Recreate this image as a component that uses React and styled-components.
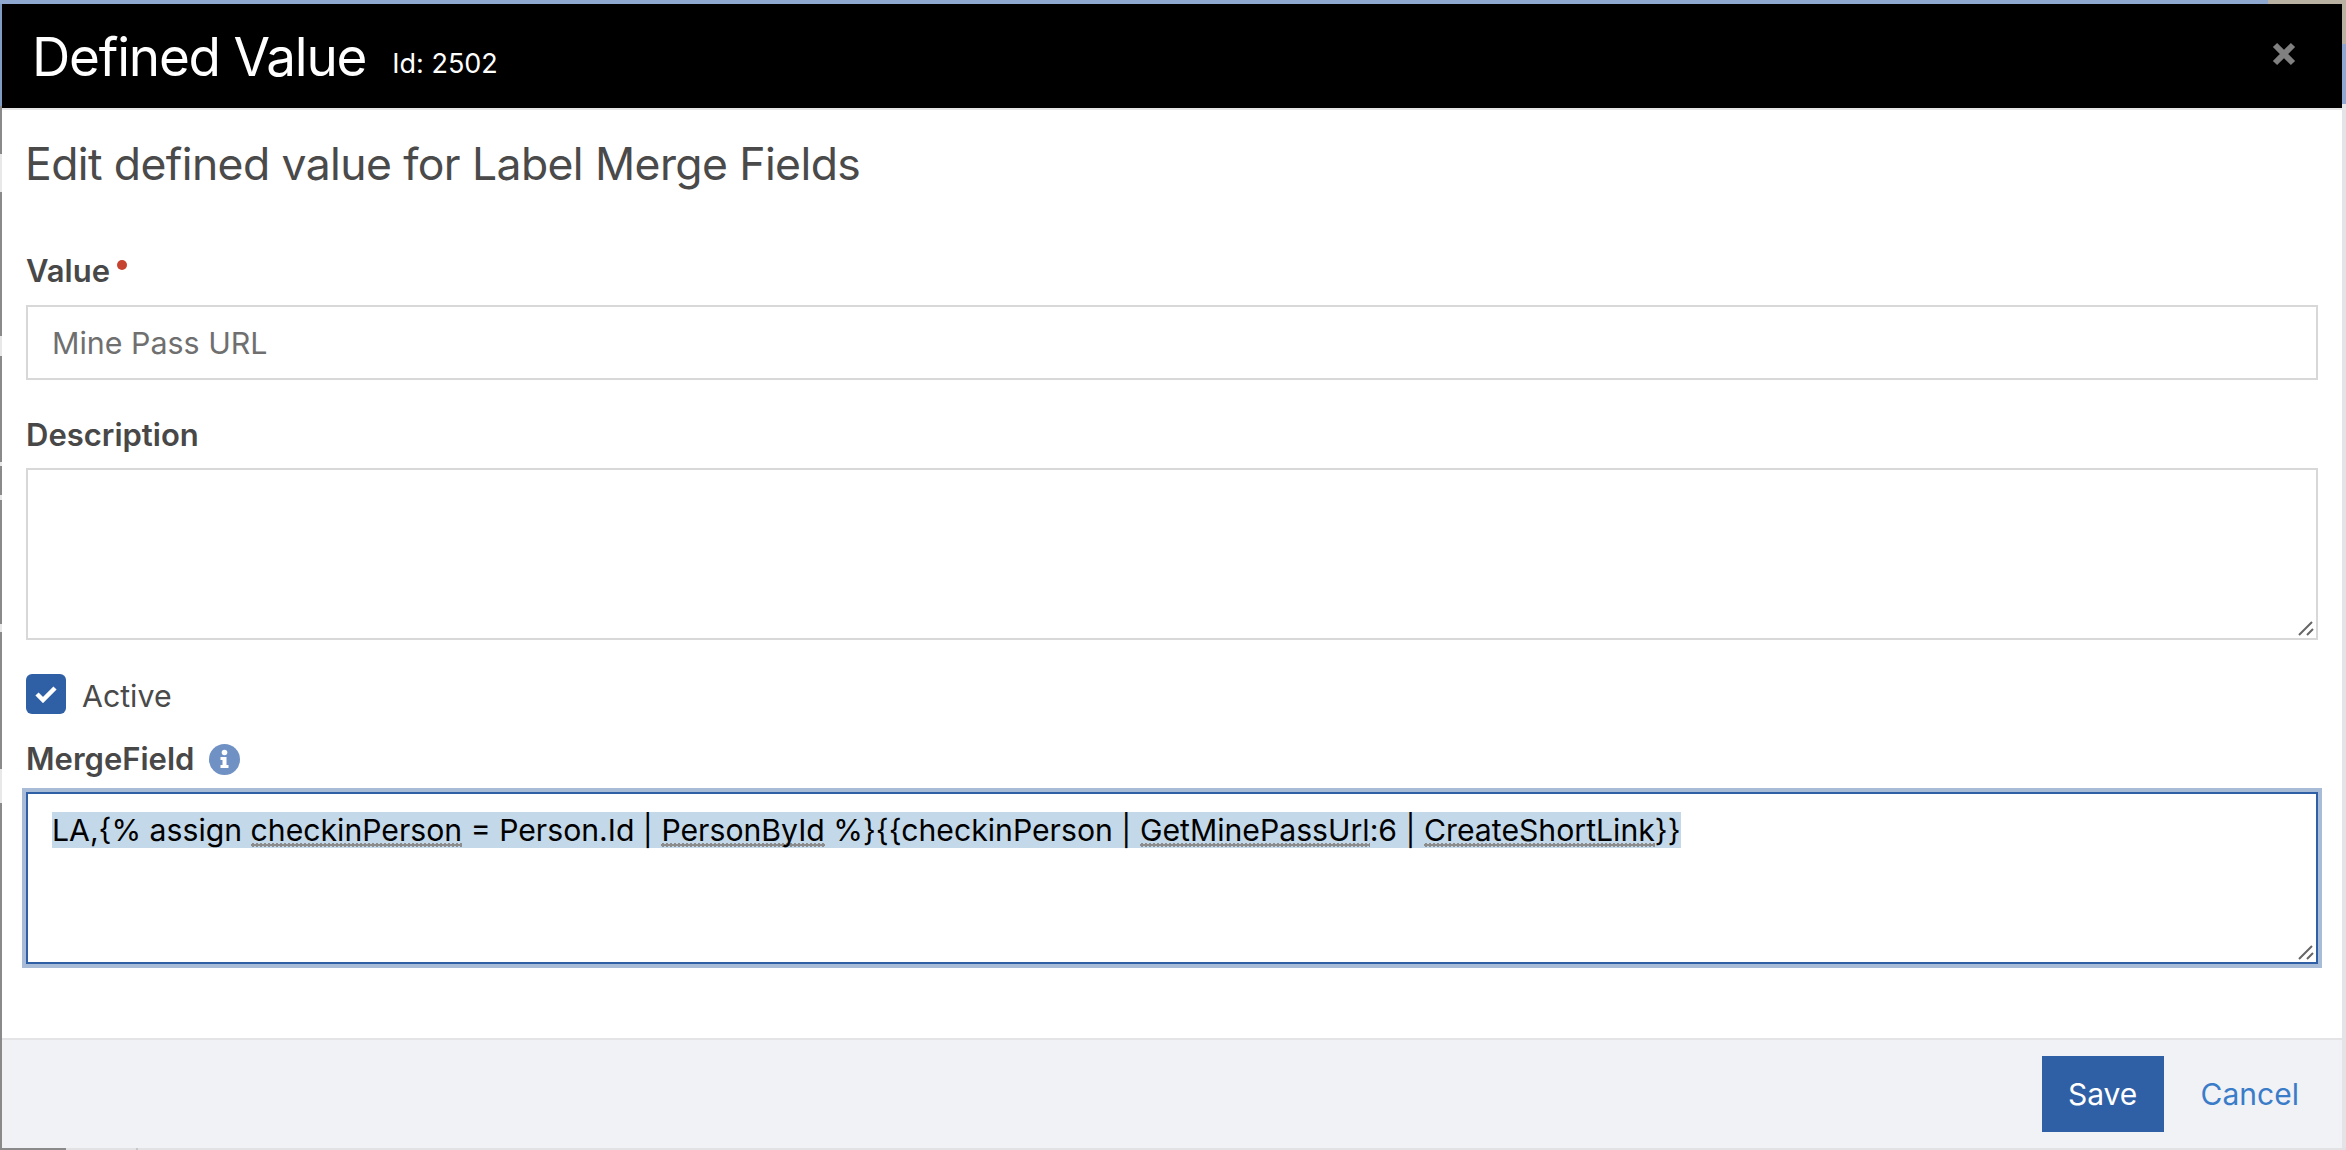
import React from "react";
import styled, { createGlobalStyle } from "styled-components";

const Global = createGlobalStyle`
  html, body { margin: 0; padding: 0; background: #e4e4e6; }
  body { width: 2346px; height: 1150px; overflow: hidden; font-family: Inter, "Liberation Sans", sans-serif; -webkit-font-smoothing: antialiased; }
`;

const Backdrop = styled.div`
  width: 2346px;
  height: 1150px;
  box-sizing: border-box;
  padding: 4px 4px 2px 2px;
  background:
    linear-gradient(90deg, transparent 2268px, #b9b2a2 2268px) top / 100% 44px no-repeat,
    linear-gradient(#8fa8d0 0 4px, transparent 4px),
    linear-gradient(90deg, #8a8a8a 0 66px, #e2e2e4 66px 136px, #c6c6c8 136px 138px, #e2e2e4 138px) bottom / 100% 2px no-repeat,
    linear-gradient(#7f9cc5 0 106px, #8a8a8a 106px 154px, #e8e8e8 154px 192px, #8a8a8a 192px 336px, #e8e8e8 336px 356px, #8a8a8a 356px 462px, #e8e8e8 462px 466px, #8a8a8a 466px 495px, #e8e8e8 495px 500px, #8a8a8a 500px 624px, #e8e8e8 624px 632px, #8a8a8a 632px 769px, #e8e8e8 769px 803px, #8a8a8a 803px) left / 2px 100% no-repeat,
    linear-gradient(#8fa8d0 44px 104px, #e4e4e6 104px) right / 4px 100% no-repeat,
    #e4e4e6;
`;

const Modal = styled.div`
  height: 100%;
  display: flex;
  flex-direction: column;
  background: #fff;
`;

const Header = styled.header`
  height: 104px;
  flex: none;
  box-sizing: border-box;
  padding: 2px 0 0 30px;
  display: flex;
  align-items: center;
  background: #000;
  color: #fff;
  position: relative;
`;

const Title = styled.h1`
  margin: 0;
  font-size: 53px;
  font-weight: 400;
  line-height: 1;
  letter-spacing: -1.2px;
`;

const Meta = styled.small`
  margin: 12px 0 0 26px;
  font-size: 27px;
`;

const Close = styled.button`
  position: absolute;
  top: 38px;
  right: 46px;
  width: 24px;
  height: 24px;
  padding: 0;
  border: 0;
  background: none;
  color: #808080;
  display: flex;
`;

const Body = styled.main`
  flex: 1;
  min-height: 0;
  border-top: 2px solid #e6e6e6;
  padding: 29px 24px 0 24px;
  display: flex;
  flex-direction: column;
`;

const Heading = styled.h2`
  margin: 0 0 64px -1px;
  font-size: 44.5px;
  font-weight: 400;
  line-height: 50px;
  letter-spacing: -0.6px;
  color: #4a4a4a;
`;

const Label = styled.label`
  display: flex;
  align-items: center;
  font-size: 31px;
  line-height: 36px;
  font-weight: 600;
  color: #484848;
`;

const Dot = styled.span`
  width: 10px;
  height: 10px;
  margin: 0 0 12px 7px;
  border-radius: 50%;
  background: #c5432f;
`;

const TextInput = styled.input`
  display: block;
  box-sizing: border-box;
  width: 100%;
  height: 75px;
  margin: 16px 0 37px;
  padding: 0 24px;
  border: 2px solid #d8d8d8;
  outline: 0;
  font: 400 30.4px Inter, "Liberation Sans", sans-serif;
  color: #6f6f6f;
`;

const Area = styled.div`
  position: relative;
  box-sizing: border-box;
  height: 172px;
  margin-top: 15px;
  border: 2px solid ${p => (p.$focus ? "#2f5fa5" : "#d8d8d8")};
  box-shadow: ${p => (p.$focus ? "0 0 0 4px #a8bcd8" : "none")};
  padding: 18px 24px 0;
  font-size: 30.2px;
  line-height: 36px;
  color: #000;
`;

const Grip = styled.svg`
  position: absolute;
  right: 2px;
  bottom: 2px;
`;

const Selected = styled.span`
  background: #c3d8e8;
  white-space: pre;
`;

const Spell = styled.span`
  background: radial-gradient(circle at 2px 2px, #8c8c8c 1.7px, transparent 2px) repeat-x 0 calc(100% - 1px) / 4px 4px;
`;

const CheckRow = styled.div`
  display: flex;
  align-items: center;
  gap: 16px;
  margin: 34px 0 0;
  font-size: 30.3px;
  color: #4a4a4a;
`;

const CheckText = styled.span`
  padding-top: 3px;
`;

const Box = styled.span`
  width: 40px;
  height: 40px;
  border-radius: 6px;
  background: #2f5fa5;
  display: flex;
  align-items: center;
  justify-content: center;
`;

const FieldRow = styled(Label)`
  margin-top: 27px;
  gap: 15px;
`;

const Footer = styled.footer`
  height: 110px;
  flex: none;
  box-sizing: border-box;
  border-top: 2px solid #e4e4e6;
  background: #f1f2f6;
  display: flex;
  align-items: center;
  justify-content: flex-end;
  padding: 0 43px 0 0;
  gap: 37px;
`;

const Save = styled.button`
  width: 122px;
  height: 76px;
  border: 0;
  padding: 0;
  background: #2f5fa5;
  color: #fff;
  font: 400 30px Inter, "Liberation Sans", sans-serif;
`;

const Cancel = styled.a`
  color: #3b7cc9;
  font-size: 30px;
`;

const ResizeGrip = () => (
  <Grip width="16" height="16" viewBox="0 0 16 16" fill="none" stroke="#666" strokeWidth="2">
    <path d="M1 15 L14 2 M9 15 L15 9" />
  </Grip>
);

export default function App() {
  return (
    <>
      <Global />
      <Backdrop>
        <Modal>
          <Header>
            <Title>Defined Value</Title>
            <Meta>Id: 2502</Meta>
            <Close aria-label="Close">
              <svg width="24" height="24" viewBox="0 0 24 24">
                <path d="M3 3 L21 21 M21 3 L3 21" stroke="currentColor" strokeWidth="6" fill="none" />
              </svg>
            </Close>
          </Header>
          <Body>
            <Heading>Edit defined value for Label Merge Fields</Heading>
            <Label>Value<Dot /></Label>
            <TextInput readOnly value="Mine Pass URL" />
            <Label>Description</Label>
            <Area><ResizeGrip /></Area>
            <CheckRow>
              <Box>
                <svg width="22" height="18" viewBox="0 0 22 18">
                  <path d="M2 9 L8 15 L20 3" fill="none" stroke="#fff" strokeWidth="4.5" />
                </svg>
              </Box>
              <CheckText>Active</CheckText>
            </CheckRow>
            <FieldRow>
              MergeField
              <svg width="31" height="31" viewBox="0 0 31 31">
                <circle cx="15.5" cy="15.5" r="15.5" fill="#7091c4" />
                <circle cx="15.5" cy="8.5" r="2.8" fill="#fff" />
                <path d="M11.5 13 H17.5 V21 H19.5 V24 H11.5 V21 H13.5 V16 H11.5 Z" fill="#fff" />
              </svg>
            </FieldRow>
            <Area $focus>
              <Selected>
                LA,{"{"}% assign <Spell>checkinPerson</Spell> = Person.Id | <Spell>PersonById</Spell> %{"}"}{"{{"}checkinPerson | <Spell>GetMinePassUrl</Spell>:6 | <Spell>CreateShortLink</Spell>{"}}"}
              </Selected>
              <ResizeGrip />
            </Area>
          </Body>
          <Footer>
            <Save>Save</Save>
            <Cancel>Cancel</Cancel>
          </Footer>
        </Modal>
      </Backdrop>
    </>
  );
}
